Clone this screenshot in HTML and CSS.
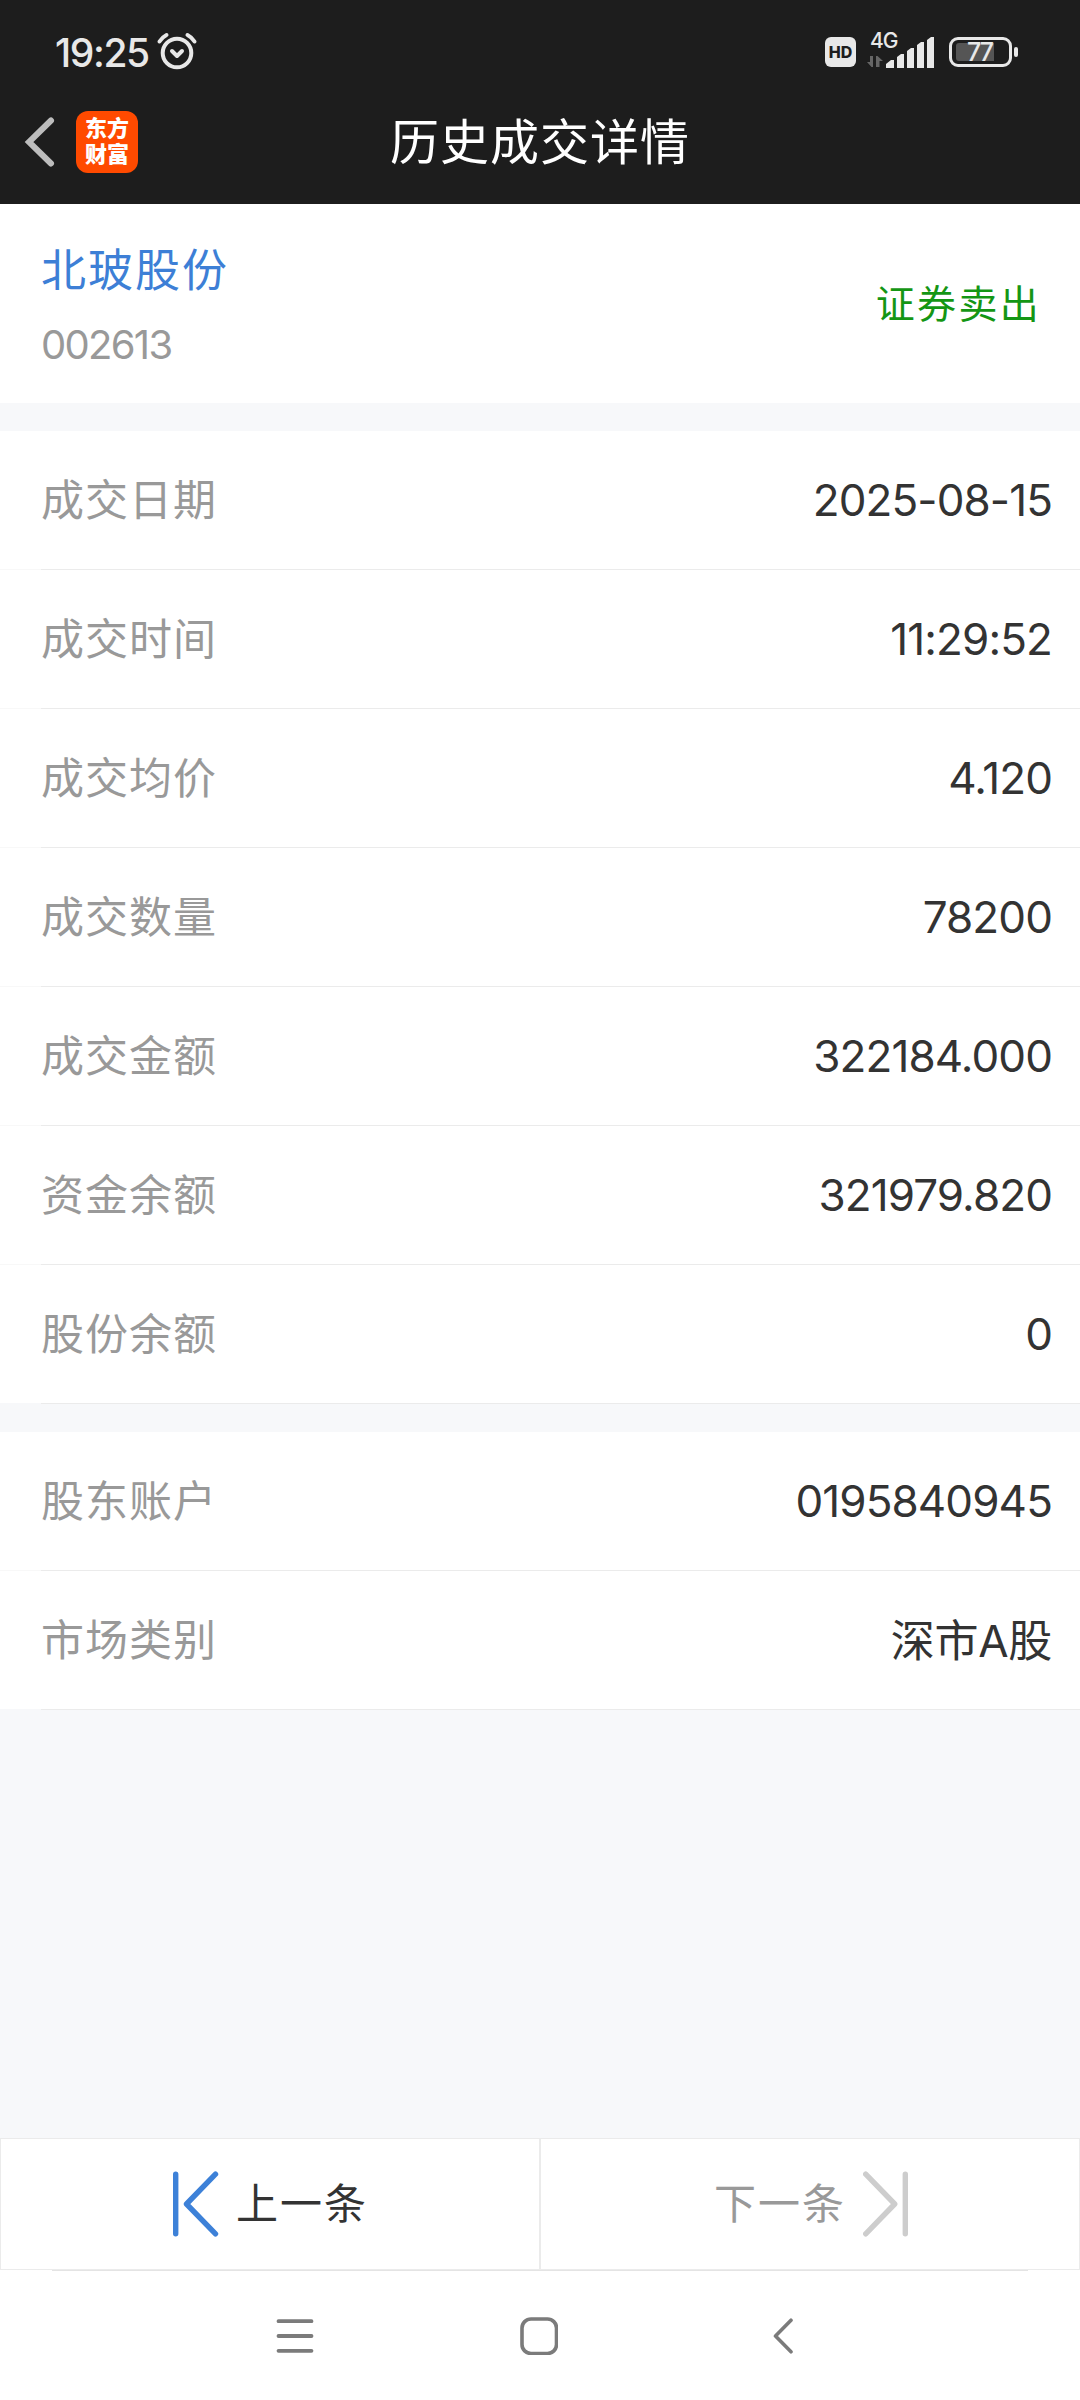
FILE: index.html
```html
<!DOCTYPE html>
<html lang="zh-CN">
<head>
    <meta charset="UTF-8">
    <meta name="viewport" content="width=device-width, initial-scale=1.0">
    <title>历史成交详情</title>
    <link rel="stylesheet" href="styles.css">
</head>
<body>
    <header class="header">
        <div class="status-bar">
            <span class="time">19:25</span>
            <svg class="alarm" width="42" height="38" viewBox="0 0 42 38" fill="none" stroke="#e8e8e8" stroke-width="4" stroke-linecap="round">
                <circle cx="21" cy="21" r="14.3"/>
                <path d="M3.5 9.5Q6.5 5 10.5 3M38.5 9.5Q35.5 5 31.5 3"/>
                <path d="M16 19l5 5 5-5" stroke-linejoin="round"/>
            </svg>
            <div class="status-right">
                <span class="hd">HD</span>
                <div class="network">
                    <span class="net-type">4G</span>
                    <svg width="68" height="34" viewBox="0 0 68 34">
                        <path d="M6 21v11H4.500L0 27h3v-6zM9 32V21h1.500L16 26h-3.500v6z" fill="#666"/>
                        <path d="M19 33v-4l5-4h3v8zM30 33V22l4-3h3v14zM40 33V16l4-3h3v20zM50 33V10l4-3h3v26zM60 33V5l4-3h3v31z" fill="#e8e8e8"/>
                    </svg>
                </div>
                <div class="battery"><span class="battery-level">77</span></div>
                <span class="battery-tip"></span>
            </div>
        </div>
        <div class="title-bar">
            <svg class="back" width="32" height="52" viewBox="0 0 32 52" fill="none" stroke="#bdbdbd" stroke-width="6" stroke-linecap="round">
                <path d="M27 4.500L5 26l22 21.500"/>
            </svg>
            <div class="logo"><span>东方</span><span>财富</span></div>
            <h1>历史成交详情</h1>
        </div>
    </header>

    <section class="stock">
        <div>
            <div class="stock-name">北玻股份</div>
            <div class="stock-code">002613</div>
        </div>
        <div class="trade-type">证券卖出</div>
    </section>

    <section class="list">
        <div class="row"><span class="label">成交日期</span><span class="value">2025-08-15</span></div>
        <div class="row"><span class="label">成交时间</span><span class="value">11:29:52</span></div>
        <div class="row"><span class="label">成交均价</span><span class="value">4.120</span></div>
        <div class="row"><span class="label">成交数量</span><span class="value">78200</span></div>
        <div class="row"><span class="label">成交金额</span><span class="value">322184.000</span></div>
        <div class="row"><span class="label">资金余额</span><span class="value">321979.820</span></div>
        <div class="row"><span class="label">股份余额</span><span class="value">0</span></div>
    </section>

    <section class="list">
        <div class="row"><span class="label">股东账户</span><span class="value">0195840945</span></div>
        <div class="row"><span class="label">市场类别</span><span class="value market">深市A股</span></div>
    </section>

    <footer class="footer">
        <div class="pager">
            <div class="pager-btn prev">
                <svg width="46" height="66" viewBox="0 0 46 66" fill="none" stroke="#3d81d8" stroke-width="5.400" stroke-linecap="round" stroke-linejoin="round">
                    <path d="M2.700 3.200v59.600M42.500 3.200L13.500 33l29 29.800"/>
                </svg>
                <span>上一条</span>
            </div>
            <div class="pager-btn next">
                <span>下一条</span>
                <svg width="46" height="66" viewBox="0 0 46 66" fill="none" stroke="#cdcdcd" stroke-width="5.400" stroke-linecap="round" stroke-linejoin="round">
                    <path d="M42.300 3.200v59.600M2.700 3.200L31.700 33l-29 29.800"/>
                </svg>
            </div>
        </div>
        <nav class="nav">
            <svg width="38" height="38" viewBox="0 0 38 38" fill="none" stroke="#7b7b7b" stroke-width="3.800" stroke-linecap="round">
                <path d="M2.500 4.200h33M2.500 19h33M2.500 33.800h33"/>
            </svg>
            <svg width="38" height="38" viewBox="0 0 38 38" fill="none" stroke="#7b7b7b" stroke-width="3.600">
                <rect x="2" y="2" width="34.500" height="34.500" rx="9"/>
            </svg>
            <svg width="22" height="38" viewBox="0 0 22 38" fill="none" stroke="#7b7b7b" stroke-width="3.600" stroke-linecap="round" stroke-linejoin="round">
                <path d="M18 3.200L2.500 19 18 34.800"/>
            </svg>
        </nav>
    </footer>
</body>
</html>
```

FILE: styles.css
```css
* { box-sizing: border-box; }
body { margin: 0; height: 2400px; display: flex; flex-direction: column; background: #f7f8fa; color: #333; font-family: Inter, "Noto Sans CJK SC", sans-serif; }
svg { display: block; flex: none; }

/* header */
.header { height: 204px; background: #1d1d1d; color: #fff; }
.status-bar { height: 104px; padding: 0 62px 0 55px; display: flex; align-items: center; color: #e8e8e8; }
.time { font-size: 39px; font-weight: 500; letter-spacing: -1.4px; line-height: 1; }
.alarm { margin-left: 7px; margin-bottom: 2px; }
.status-right { margin-left: auto; display: flex; align-items: center; }
.hd { width: 31px; height: 30px; border-radius: 6px; background: #e8e8e8; color: #1d1d1d; font-size: 16px; font-weight: 800; line-height: 30px; text-align: center; }
.network { position: relative; margin: 0 14px 0 11px; }
.net-type { position: absolute; left: 3px; top: -7px; font-size: 21px; font-weight: 500; line-height: 25px; letter-spacing: -1px; }
.battery { width: 63px; height: 30px; padding: 3px 4px; border: 3px solid #e8e8e8; border-radius: 9px; }
.battery-level { display: block; width: 38px; height: 18px; padding-left: 11px; border-radius: 3px 0 0 3px; background: #555; font-size: 25px; font-weight: 500; line-height: 18px; letter-spacing: -2px; }
.battery-tip { width: 4px; height: 10px; margin-left: 2px; border-radius: 2px; background: #e8e8e8; }
.title-bar { height: 76px; padding-left: 24px; display: grid; grid-template-columns: 52px 62px 1fr 138px; align-items: center; }
.logo { height: 62px; padding-top: 4px; border-radius: 12px; background: #ff4a00; font-size: 22px; font-weight: 900; line-height: 26px; text-align: center; }
.logo span { display: block; }
h1 { margin: 0; padding-top: 2px; font-size: 49px; font-weight: 400; line-height: 74px; letter-spacing: 1px; text-align: center; }

/* stock */
.stock { height: 199px; padding: 34px 39px 0 41px; display: flex; justify-content: space-between; background: #fff; }
.stock-name { font-size: 45px; line-height: 66px; letter-spacing: 2px; color: #3d7fd6; }
.stock-code { margin-top: 14px; font-size: 40px; line-height: 54px; letter-spacing: -1.7px; color: #999; }
.trade-type { margin-top: 34px; font-size: 39px; line-height: 64px; letter-spacing: 2.3px; color: #149614; }

/* rows */
.list { margin-top: 28px; background: #fff; }
.row { position: relative; height: 139px; padding: 0 28px 0 41px; display: flex; align-items: center; justify-content: space-between; border-bottom: 1px solid #f8f8f8; }
.row::after { content: ""; position: absolute; left: 41px; right: 0; bottom: -1px; height: 1px; background: #ebebeb; }
.row:last-child { border-bottom-color: #f7f8fa; }
.label { padding-bottom: 6px; font-size: 43px; letter-spacing: 1px; color: #999; }
.value { font-size: 44px; letter-spacing: -0.9px; }
.market { padding-bottom: 5px; letter-spacing: -0.3px; }

/* footer */
.footer { margin-top: auto; background: #fff; }
.pager { display: grid; grid-template-columns: 1fr 1fr; height: 132px; }
.pager-btn { display: flex; align-items: center; border: 1px solid #ebebeb; font-size: 42px; letter-spacing: 2px; }
.pager-btn span { padding-bottom: 7px; }
.prev { padding-left: 172px; gap: 17px; }
.next { padding-left: 173px; gap: 17px; color: #999; }
.nav { height: 130px; margin: 0 52px; padding: 0 234px 0 224px; display: grid; grid-template-columns: 244px 253px 22px; align-items: center; border-top: 1px solid #e4e4e4; }
```
